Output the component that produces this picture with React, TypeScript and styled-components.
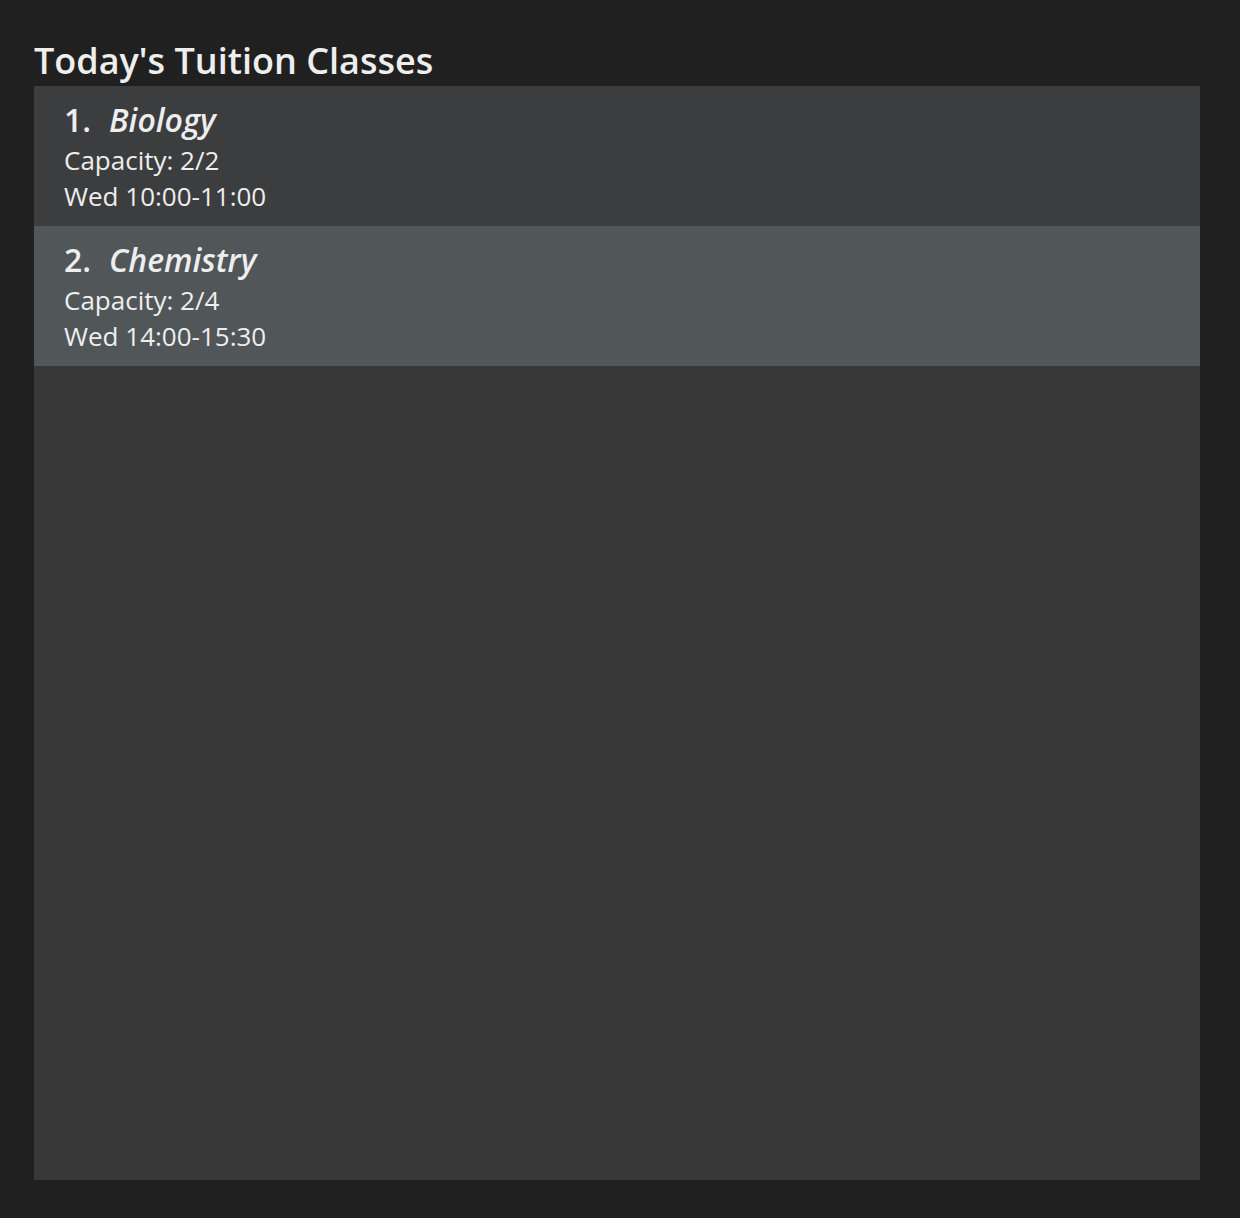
import React from "react";
import styled, { createGlobalStyle } from "styled-components";

const Global = createGlobalStyle`
  html, body { margin: 0; padding: 0; background: #202020; }
  body { font-family: "Open Sans", "Noto Sans", sans-serif; color: #eeeeee; }
`;

const Page = styled.div`
  box-sizing: border-box;
  height: 1218px;
  padding: 37px 40px 38px 34px;
  display: flex;
  flex-direction: column;
`;

const Title = styled.h1`
  margin: 0 0 1px 0;
  font-size: 36px;
  line-height: 48px;
  font-weight: 600;
  color: #eeeeee;
`;

const Panel = styled.div`
  flex: 1;
  background: #383838;
  display: flex;
  flex-direction: column;
`;

const Row = styled.div<{ $selected?: boolean }>`
  height: 140px;
  box-sizing: border-box;
  padding: 14px 30px 12px 30px;
  background: ${(p) => (p.$selected ? "#515659" : "#3c3d3f")};
  display: flex;
  flex-direction: column;
`;

const Header = styled.div`
  font-size: 32px;
  line-height: 40px;
  font-weight: 600;
  margin-bottom: 2px;
  display: flex;
  gap: 18px;
`;

const Name = styled.span`
  font-style: italic;
`;

const Detail = styled.div`
  font-size: 26px;
  line-height: 36px;
  font-weight: 400;
`;

const classes = [
  { name: "Biology", capacity: "2/2", time: "Wed 10:00-11:00" },
  { name: "Chemistry", capacity: "2/4", time: "Wed 14:00-15:30" },
];

export default function App() {
  return (
    <>
      <Global />
      <Page>
        <Title>Today's Tuition Classes</Title>
        <Panel>
          {classes.map((c, i) => (
            <Row key={c.name} $selected={i === 1}>
              <Header>
                <span>{i + 1}.</span>
                <Name>{c.name}</Name>
              </Header>
              <Detail>Capacity: {c.capacity}</Detail>
              <Detail>{c.time}</Detail>
            </Row>
          ))}
        </Panel>
      </Page>
    </>
  );
}
